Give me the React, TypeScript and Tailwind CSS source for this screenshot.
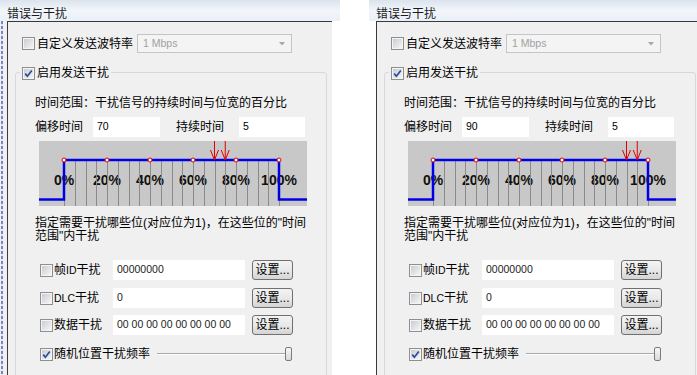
import React from "react";

const FONT = "font-['Liberation_Sans','Noto_Sans_CJK_SC',sans-serif]";

function CheckBox({ checked = false }: { checked?: boolean }) {
    return (
        <span className="relative flex h-[13px] w-[13px] shrink-0 items-center justify-center border border-[#8e8f8f] bg-[#f4f4f4]">
            <span className="h-[9px] w-[9px] bg-linear-to-br from-[#c9cdd3] to-[#f5f5f5]" />
            {checked && (
                <svg className="absolute left-[1px] top-[1px]" width="9" height="9" viewBox="0 0 9 9">
                    <path d="M1.2 4.6 L3.4 7.2 L7.8 1.4" fill="none" stroke="#2a4a9a" strokeWidth="1.7" />
                </svg>
            )}
        </span>
    );
}

function Chart({ offset }: { offset: number }) {
    const px = (p: number) => 25 + p * 2.15;
    const ticks = Array.from({ length: 21 }, (_, i) => Math.round(px(i * 5)) + 0.5);
    const arrows = [px(offset), px(offset + 5)];

    return (
        <svg width="268" height="65" className="block">
            <rect width="268" height="65" fill="#c8c8c8" />
            {[0, 20, 40, 60, 80, 100].map((p) => (
                <text
                    key={p}
                    x={px(p)}
                    y="44"
                    textAnchor="middle"
                    fontSize="14"
                    fontWeight="bold"
                    fontFamily="Liberation Sans, Arial, sans-serif"
                    fill="#111"
                >
                    {p}%
                </text>
            ))}
            {ticks.map((x) => (
                <line key={x} x1={x} x2={x} y1="19" y2="65" stroke="#8a8a8a" strokeWidth="1" />
            ))}
            <path d="M0 58.5 H25 V19 H240 V58.5 H268" fill="none" stroke="#0000e6" strokeWidth="2.5" />
            {[0, 20, 40, 60, 80, 100].map((p) => (
                <circle key={p} cx={px(p)} cy="19" r="2" fill="#fff" stroke="#e00000" strokeWidth="1" />
            ))}
            {arrows.map((x) => (
                <g key={x} stroke="#e00000" strokeWidth="1" fill="none">
                    <line x1={x} x2={x} y1="0" y2="19" />
                    <polyline points={`${x - 4},9 ${x},19 ${x + 4},9`} />
                </g>
            ))}
        </svg>
    );
}

function BitRow({ label, value, mt }: { label: React.ReactNode; value: string; mt: string }) {
    return (
        <div className={`flex h-[20px] items-center pl-[5px] ${mt}`}>
            <CheckBox />
            <span className="ml-[1px] w-[59px] text-[12px] leading-[14px]">{label}</span>
            <div className="flex h-[20px] w-[132px] items-center bg-white pl-[4px] text-[10.5px] text-[#222]">{value}</div>
            <button className="ml-[7px] flex h-[20px] w-[41px] items-center justify-center rounded-[3px] border border-[#707070] bg-linear-to-b from-[#f3f3f3] via-[#e9e9e9] to-[#d4d4d4] text-[12px] leading-none text-black">
                设置...
            </button>
        </div>
    );
}

function Panel({ offset, dashed }: { offset: number; dashed: boolean }) {
    return (
        <div className="flex w-[340px] shrink-0 flex-col">
            <div className="h-[24px] bg-linear-to-b from-[#dce3ec] via-[#f2f6fb] to-[#eaf0f8] pl-[7px] pt-[7px] text-[12px] leading-[14px] text-[#1a1a1a]">
                错误与干扰
            </div>
            <div className="flex flex-1">
                <div className={`w-[7px] shrink-0 ${dashed ? "bg-[#f0f0f0]" : "bg-white"}`}>
                    {dashed && (
                        <div className="ml-[1px] h-full w-[2px] bg-[repeating-linear-gradient(to_bottom,#7d86cc_0px,#7d86cc_3px,#e2e5f4_3px,#e2e5f4_5px)]" />
                    )}
                </div>
                <div className="w-[325px] border-l border-t border-[#3a3a3a] bg-[#f0f0f0]">
                    <div className="mt-[12px] flex h-[19px] items-center pl-[14px]">
                        <CheckBox />
                        <span className="ml-[2px] w-[100px] text-[12px] leading-[14px]">自定义发送波特率</span>
                        <div className="flex h-[19px] w-[155px] items-center justify-between border border-[#c2c6c9] bg-[#f4f4f4] pl-[5px] pr-[6px] text-[10.5px] text-[#a0a0a0]">
                            <span>1 Mbps</span>
                            <svg width="6" height="4" viewBox="0 0 6 4">
                                <path d="M0 0 H6 L3 3.5 Z" fill="#a8a8a8" />
                            </svg>
                        </div>
                    </div>

                    <div className="ml-[7px] mt-[19px] h-[320px] w-[312px] rounded-[3px] border border-[#d5d9dc]">
                        <div className="-mt-[7px] ml-[4px] flex h-[14px] w-fit items-center bg-[#f0f0f0] pl-[2px] pr-[2px]">
                            <CheckBox checked />
                            <span className="ml-[2px] text-[12px] leading-[14px]">启用发送干扰</span>
                        </div>
                        <div className="pl-[19px]">
                            <div className="mt-[16px] h-[14px] text-[12px] leading-[14px]">
                                时间范围：干扰信号的持续时间与位宽的百分比
                            </div>
                            <div className="mt-[7px] flex h-[20px] items-center text-[12px]">
                                <span className="w-[58px]">偏移时间</span>
                                <div className="flex h-[20px] w-[67px] items-center bg-white pl-[4px] text-[10.5px]">{offset}</div>
                                <span className="ml-[16px] w-[63px]">持续时间</span>
                                <div className="flex h-[20px] w-[66px] items-center bg-white pl-[4px] text-[10.5px]">5</div>
                            </div>
                            <div className="ml-[4px] mt-[4px]">
                                <Chart offset={offset} />
                            </div>
                            <div className="mt-[11px] text-[12px] leading-[13px]">
                                指定需要干扰哪些位(对应位为1)，在这些位的"时间
                                <br />
                                范围"内干扰
                            </div>
                            <BitRow
                                mt="mt-[17px]"
                                label={
                                    <>
                                        帧<span className="text-[10.5px]">ID</span>干扰
                                    </>
                                }
                                value="00000000"
                            />
                            <BitRow
                                mt="mt-[8px]"
                                label={
                                    <>
                                        <span className="text-[10.5px]">DLC</span>干扰
                                    </>
                                }
                                value="0"
                            />
                            <BitRow mt="mt-[7px]" label="数据干扰" value="00 00 00 00 00 00 00 00" />
                            <div className="mt-[9px] flex h-[20px] items-center pl-[5px]">
                                <CheckBox checked />
                                <span className="ml-[1px] w-[103px] text-[12px] leading-[14px]">随机位置干扰频率</span>
                                <div className="flex w-[135px] items-center">
                                    <div className="h-[2px] flex-1 border-t border-[#a8a8a8] bg-white" />
                                    <div className="h-[14px] w-[7px] rounded-[2px] border border-[#7a7a7a] bg-linear-to-b from-[#f6f6f6] to-[#dadada]" />
                                </div>
                            </div>
                        </div>
                    </div>
                </div>
            </div>
        </div>
    );
}

export default function App() {
    return (
        <div className={`flex h-[375px] w-[697px] gap-[29px] overflow-hidden bg-white text-black ${FONT}`}>
            <Panel offset={70} dashed />
            <Panel offset={90} dashed={false} />
        </div>
    );
}
